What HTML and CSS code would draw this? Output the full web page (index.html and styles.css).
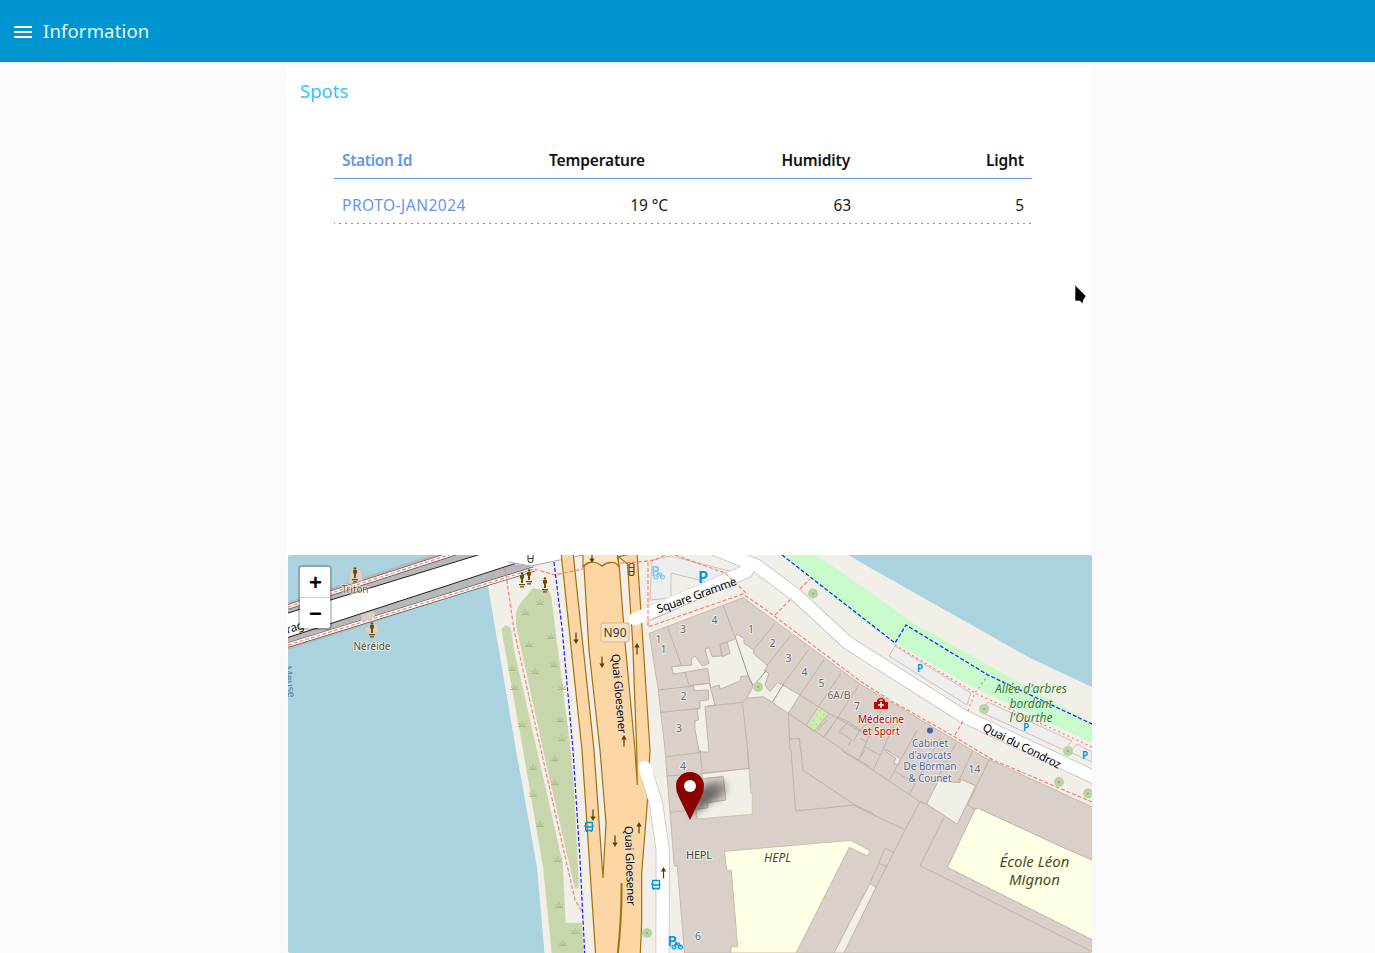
FILE: index.html
```html
<!DOCTYPE html>
<html lang="en">
<head>
<meta charset="utf-8">
<title>Information</title>
<link rel="stylesheet" href="styles.css">
</head>
<body>
<header class="topbar">
  <svg class="menu-icon" width="18" height="12" viewBox="0 0 18 12"><path d="M0 0h18v2H0zM0 5h18v2H0zM0 10h18v2H0z" fill="#fff"/></svg>
  <span class="topbar-title">Information</span>
</header>
<main class="card">
  <h1 class="card-title">Spots</h1>
  <section class="stations">
    <div class="row head"><span class="id">Station Id</span><span class="temp">Temperature</span><span class="hum">Humidity</span><span class="light">Light</span></div>
    <div class="row data"><a class="id">PROTO-JAN2024</a><span class="temp">19 °C</span><span class="hum">63</span><span class="light">5</span></div>
    <svg class="dots" width="698" height="1"><path d="M0 .5H698" stroke="#6495ed" stroke-width="1" stroke-dasharray="2 4" stroke-dashoffset="1"/></svg>
  </section>
  <section class="map">
    <svg class="map-canvas" width="804" height="398" viewBox="288 555 804 398">
      <defs>
        <g id="statue" fill="#734a08"><circle cx="0" cy="-6.500" r="1.300"/><path d="M-2-5h4v3.500H1V3h-2v-4.500h-1zM-3 4h6v1.300h-6zM-2 6.200h4v1.300h-4z"/></g>
        <g id="grass" fill="none" stroke="#a9bd8c" stroke-width="1"><path d="M-4 2.500h8M0 2v-5M-1 2l-2.500-3M1 2l2.500-3"/></g>
        <g id="up"><path d="M0 5.500v-9" stroke="#5c3b00" stroke-width="1.200"/><path d="M-2.600-1.500L0-6l2.600 4.500z" fill="#5c3b00"/></g>
        <g id="tree"><circle r="5" fill="#b9d3a3"/><circle r="1" fill="#85a974"/></g>
        <g id="bus" fill="none" stroke="#0092da" stroke-width="1.300"><rect x="-3.400" y="-4.500" width="6.800" height="8" rx=".5"/><path d="M-3.400 0h6.800M-2.500 3.500v1.500M2.500 3.500v1.500"/><path d="M-4.200-2v2M4.200-2v2" stroke-width=".8"/></g>
        <g id="bike" fill="none" stroke-width="1.200"><circle cx="-3" cy="2" r="2"/><circle cx="3.500" cy="2" r="2"/><path d="M-3 2l2-4 3 3.500M-1-2h3l1.500 4M-2.500-3h2"/></g>
        <linearGradient id="fade" gradientUnits="userSpaceOnUse" x1="697" y1="805" x2="728" y2="785"><stop offset="0" stop-opacity=".5"/><stop offset=".5" stop-opacity=".5"/><stop offset="1" stop-opacity=".2"/></linearGradient>
        <filter id="soft" x="-50%" y="-50%" width="200%" height="200%"><feGaussianBlur stdDeviation="3.500"/></filter>
      </defs>
      <rect x="288" y="555" width="804" height="398" fill="#f2efe9"/>
      <path d="M288 555H480L488 586L516 750L537 867L544.500 953H288z" fill="#aad3df"/>
      <path d="M848 555L860 562L1030 658L1092 687V555z" fill="#aad3df"/>
      <path d="M782 555H816L860 585L913 623L988 665L1092 723V743L973 687L895 643L860 619z" fill="#c8facc"/>

      <!-- embankment grass -->
      <g fill="#c8d7ab">
        <path d="M501.500 629L506 625L511 628L514 650L537 750L562.700 863L565.700 922.700H581.700L584 953H551.700L543 867L523 750L502 633z"/>
        <path d="M516 613L519 605L533 588L542 590L548 589L551 595L558 650L570.700 750L574 790L579 887L575 889L543 750L516 625z"/>
      </g>
      <use href="#grass" x="540" y="602"/><use href="#grass" x="525" y="612"/><use href="#grass" x="551" y="636"/><use href="#grass" x="529" y="644"/><use href="#grass" x="554" y="664"/><use href="#grass" x="535" y="671"/><use href="#grass" x="512" y="668"/><use href="#grass" x="514" y="687"/><use href="#grass" x="562" y="687"/><use href="#grass" x="522" y="724"/><use href="#grass" x="560" y="719"/><use href="#grass" x="562" y="738"/><use href="#grass" x="555" y="758"/><use href="#grass" x="533" y="767"/><use href="#grass" x="555" y="782"/><use href="#grass" x="533" y="794"/><use href="#grass" x="540" y="824"/><use href="#grass" x="558" y="859"/><use href="#grass" x="559" y="905"/><use href="#grass" x="575" y="931"/><use href="#grass" x="563" y="943"/>

      <!-- bridge -->
      <path d="M288 602L431 555H530V571L488 585L288 650z" fill="#b8b8b8"/>
      <path d="M288 613L478 555H583L531 566L514 564L288 637z" fill="#fff"/>
      <path d="M288 613L478 555M288 637.500L515 563.500" stroke="#222" fill="none"/>
      <path d="M508 562L531 566L583 555" stroke="#aaa" fill="none"/>
      <path d="M288 607L455 553M288 645L534 569" stroke="#555" stroke-width="5" fill="none"/>
      <path d="M288 607L455 553M288 645L534 569" stroke="#fff" stroke-width="3.600" fill="none"/>
      <path d="M349 584V575A6.500 6.500 0 0 1 362 574L363 580z" fill="#d9d0c9" stroke="#c9beb4" stroke-width=".6"/>
      <path d="M361 615l13-4 1 6-13 4zM364 627.500l13.500-4 1.500 6q-1 6-7 6.500-5-1-8-8.500z" fill="#d9d0c9" stroke="#c9beb4" stroke-width=".6"/>

      <!-- parking lots -->
      <g fill="#eee" stroke="#d3bfb8">
        <path d="M652 560L671 556L745 575L731 588L671 573L671 598L650 600z"/>
        <path d="M895 646L889 656L967 705L971 693z"/>
        <path d="M988 702L983 713L1064 750L1072 741z"/>
        <path d="M1077 744L1070 752L1092 762V752z"/>
      </g>

      <!-- buildings -->
      <path d="M649.300 633.300L743.300 597.700L860 684L983 756.700L1092 807V953H684.500L677.300 866H674.300L665 750L658.300 690z" fill="#d9d0c9" stroke="#c6b9ac"/>
      <g transform="matrix(.333333 0 0 .333333 640 550)" fill="#f2efe9" stroke="#c0b2a6" stroke-width="3">
        <path d="M95 350L155 345V325L165 318L187 348L207 340L195 297L207 293L217 320L245 318L240 283L283 268L290 252L312 265V280L342 300L340 310L383 347L372 362L387 370L375 405L390 425L412 398L425 403L480 435L445 490L370 440L320 445L340 408L323 377L303 380L300 393L240 418L238 405L212 413L203 355L135 367L100 372z"/>
        <path d="M160 405L208 400L225 465L195 470L207 606H178L165 540V512L175 510L172 478L180 475V452L205 450L206 420L162 422z"/>
        <path d="M535 470L567 490L522 545L498 527z" fill="#cdebb0"/>
        <path d="M537 482h2M550 494h2M530 494h2M540 508h2M520 510h2M528 524h2M512 524h2" stroke="#7fb35c"/>
        <path d="M240 283L262 277L270 310L248 320z" fill="#d9d0c9"/>
        <g fill="none"><path d="M82 230L125 348M135 367L148 407L208 400M55 420L160 408M62 487L180 475M250 168L287 265M405 220L340 300M452 257L380 347M505 300L430 403M552 330L480 435M603 370L535 470M657 405L595 500L552 560M195 470L307 457L320 445M307 457L323 600L332 730M445 490L450 600M445 490L610 600M450 567L478 565L482 600M480 435L535 470M567 490L690 560M530 545L560 510M590 500L625 515L598 545L635 570L625 585M625 515L660 540L640 575M660 540L690 555M690 510L655 545M552 560L575 530"/>
        <path d="M287 265L325 378L340 408L380 360M430 403L397 457" stroke="#999"/></g>
      </g>
      <g transform="matrix(.333333 0 0 .333333 640 750)" fill="#f2efe9" stroke="#c0b2a6" stroke-width="3">
        <path d="M185 72L327 55L332 130H337V193L172 207L168 178L203 173V158L257 150L250 80L188 86z" stroke="#cdc6a8"/>
        <path d="M253 304L632 271L690 302L683 318L628 292L468 609H273V590H293L274 361H260z" fill="#ffffe5" stroke="#c9bea0"/>
        <g fill="none"><path d="M188 86L250 80L257 150L203 158V173L168 178M75 20L180 8V0L187 72M78 78L185 72M92 187L168 178M323 0L327 55M184 70L327 55M449 0L453 0L467 183L645 165M483 0L488 60L645 165L700 192M605 0L655 30L690 50M655 30L675 0"/></g>
      </g>
      <g transform="matrix(.333333 0 0 .333333 860 730)" fill="#f2efe9" stroke="#c0b2a6" stroke-width="3">
        <path d="M345 238L355 235L600 348L700 392V631L262 412z" fill="#ffffe5"/>
        <path d="M235 152L300 158L302 148L347 167L292 283L200 222z"/>
        <path d="M30 460L48 472L-48 669H-78z"/>
        <path d="M75 58L120 85L115 105L102 98L108 85L78 65z"/>
        <g fill="none"><path d="M-50 65L0 95L180 215L135 300L48 472M-15 228L0 235L135 300M75 355L103 368M75 355L30 460M55 400L82 410M180 215L200 222M252 262L180 407L700 667M345 238L323 225L387 90M337 65L295 155M150 190L240 25M88 150L172 0M40 120L100 -10M0 80L45 -20L70-70M105 125L165 158M15 50L60 75M0 25L25 38M288 40L225 160"/></g>
      </g>

      <!-- N90 carriageways -->
      <g fill="#fcd6a4" stroke="#a3700f" stroke-width="1.200">
        <path d="M561 552L582 750L596 960H640L641.700 922V873L647 807L650 750L637 552L618 557L619.300 567Q616 561 611.500 562.500Q606 563 602 566Q597 561 592 562Q586 563 584 567L589 650L600 750L606 823L603 878L594 750L573 552z"/>
        <path d="M583 552V567Q586 562 592 562Q597 562 602 566Q607 562 611.500 562.500Q616 562 619 567L617 552z" fill="#fae5c7"/>
        <path d="M619.300 567L625 642L635 750L637.300 785L636.700 750L632.700 642L627.500 564L618 556.500z" fill="#f2efe9"/>
        <path d="M621.500 883Q622 915 617.700 955" fill="none" stroke-width="2"/>
      </g>

      <!-- white streets -->
      <g fill="none" stroke-linejoin="round" stroke-linecap="round">
        <g stroke="#c5c5c5" stroke-width="14"><path d="M647 614.500L747 571M648 778L656 803L662.700 850L662.500 965M700 543L757 566L796 595L848 643L963 716L1100 780"/></g>
        <g stroke="#fff" stroke-width="12.400"><path d="M635 619L747 571M644.500 767L656 803L662.700 850L662.500 965M700 543L757 566L796 595L848 643L963 716L1100 780"/></g>
      </g>

      <!-- footways and cycleways -->
      <g fill="none" stroke="#fa8072" stroke-width="1.200" stroke-dasharray="4 2">
        <path d="M288 607L455 553M288 645L534 569L555 575L583 569M505 568L514 630L541 750L575 900L583 913"/>
        <path d="M620 563L638 562L655 560L665 555M648 562V627L743 594L762 607L773 615L860 681L893 702L955 737L993 760L1092 802M675 555L725 573L747 594M775 615L791 599M800 589L810 579M955 735L963 721"/>
        <path d="M895 645L975 693L1092 747M968 711L975 693L988 675" stroke-dasharray="2 3"/>
      </g>
      <g fill="none" stroke="#1a1aff" stroke-width="1.200" stroke-dasharray="4 2"><path d="M554 562L562 628L573 750L580 860L584.700 953M782 555L895 643L906 625L988 675L1092 724"/></g>

      <!-- symbols -->
      <use href="#statue" x="355" y="575"/><use href="#statue" x="372" y="630"/><use href="#statue" x="522" y="580"/><use href="#statue" x="529" y="577"/><use href="#statue" x="545" y="585"/>
      <use href="#tree" x="813" y="593.500"/><use href="#tree" x="758" y="687"/><use href="#tree" x="984" y="709"/><use href="#tree" x="1068" y="751"/><use href="#tree" x="1059" y="782"/><use href="#tree" x="1088" y="793.500"/><use href="#tree" x="647" y="933"/>
      <use href="#up" x="637" y="649"/><use href="#up" x="624" y="741"/><use href="#up" x="639" y="828"/><use href="#up" x="663.500" y="873"/>
      <use href="#up" transform="translate(576 638) rotate(180)"/><use href="#up" transform="translate(602 662) rotate(180)"/><use href="#up" transform="translate(592 557) rotate(180)"/><use href="#up" transform="translate(593 815) rotate(180)"/><use href="#up" transform="translate(615 841) rotate(180)"/>
      <use href="#bus" x="589" y="827"/><use href="#bus" x="656" y="885"/>
      <g fill="none" stroke="#444" stroke-width="1.100"><rect x="629" y="563.500" width="5" height="12" rx="2"/><path d="M629 567.500h5M629 571.500h5M528 555v5q0 2.500 2.500 2.500t2.500-2.500v-5M528 558.500h5"/></g>
      <use href="#bike" x="659" y="575" stroke="#7fc8ec"/><use href="#bike" x="677" y="945" stroke="#0092da"/>
      <text class="parking faint" x="651" y="576" font-size="14">P</text>
      <text class="parking" x="698" y="583" font-size="16.500">P</text>
      <text class="parking" x="667.500" y="946" font-size="15">P</text>
      <g class="parking" font-size="10"><text x="917" y="672">P</text><text x="1023" y="731">P</text><text x="1082" y="759">P</text></g>
      <path d="M874 709v-7h3q0-4 4-4t4 4h3v7zM879 701h4q0-2-2-2t-2 2z" fill="#bf0000"/><path d="M881 702v6M878 705h6" stroke="#fff" stroke-width="1.500"/>
      <circle cx="930" cy="730.500" r="3" fill="#4863a0"/>

      <!-- labels -->
      <g class="number">
        <text x="658.500" y="643">1</text><text x="663.500" y="653">1</text><text x="683" y="633">3</text><text x="714.500" y="624">4</text><text x="751" y="632.500">1</text><text x="772.500" y="647">2</text><text x="788.500" y="662">3</text><text x="804.500" y="676">4</text><text x="821.500" y="687">5</text><text x="839" y="699" textLength="23">6A/B</text><text x="857" y="710">7</text><text x="683.500" y="700">2</text><text x="679" y="732">3</text><text x="683" y="770">4</text><text x="974.500" y="773">14</text><text x="698" y="940">6</text>
      </g>
      <rect x="601" y="623" width="28" height="19" rx="2" fill="#f7e0c5" stroke="#d9b58c"/>
      <text class="plate" x="615" y="637" textLength="23">N90</text>
      <text class="label street" transform="translate(698 599) rotate(-20)" textLength="84">Square Gramme</text>
      <text class="label street" transform="translate(1020 749.500) rotate(27)" textLength="86">Quai du Condroz</text>
      <text class="label street" transform="translate(615 694) rotate(85)" textLength="80">Quai Gloesener</text>
      <text class="label street" transform="translate(626 866) rotate(88)" textLength="80">Quai Gloesener</text>
      <text class="label street" transform="translate(296 631) rotate(-17)">rag</text>
      <text class="label river" transform="translate(286 682) rotate(82)" textLength="32">Meuse</text>
      <g class="label statue-name"><text x="355" y="593" textLength="27" opacity=".8">Triton</text><text x="372" y="649.500" textLength="37">Néréide</text></g>
      <g class="label medical"><text x="881" y="723" textLength="46">Médecine</text><text x="881" y="735" textLength="37">et Sport</text></g>
      <g class="label office"><text x="930" y="746.500" textLength="36">Cabinet</text><text x="930" y="758.500" textLength="43">d'avocats</text><text x="930" y="770" textLength="53">De Borman</text><text x="930" y="782" textLength="43">&amp; Counet</text></g>
      <g class="label alley"><text x="1031" y="693" textLength="72">Allée d'arbres</text><text x="1031" y="707.500" textLength="43">bordant</text><text x="1031" y="721.500" textLength="43">l'Ourthe</text></g>
      <text class="label" x="699" y="858.500" font-size="11" textLength="26" fill="#444">HEPL</text>
      <text class="label" x="777.500" y="862" font-size="12" font-style="italic" textLength="27" fill="#4d4d12">HEPL</text>
      <g class="label school"><text x="1034.500" y="867" textLength="70">École Léon</text><text x="1034.500" y="885" textLength="51">Mignon</text></g>

      <!-- station marker -->
      <path d="M691 817L698 792Q712 778 726 782Q732 793 712 801z" fill="url(#fade)" filter="url(#soft)"/>
      <path d="M690 820L679 797.500Q676 792 676 786A14 14 0 0 1 704 786Q704 792 701 797.500z" fill="#8b0000"/>
      <circle cx="690" cy="786" r="6" fill="#fff"/>
    </svg>
    <div class="zoom"><button class="zoom-btn">+</button><button class="zoom-btn">−</button></div>
  </section>
</main>
<svg class="cursor" width="14" height="22" viewBox="0 0 14 22"><path d="M1 1V17H6L8.500 20L9.500 16L12 12z" fill="#000" stroke="#fff" stroke-width=".6"/></svg>
</body>
</html>
```
FILE: styles.css
```css
* { box-sizing: border-box; }
body { margin: 0; height: 953px; overflow: hidden; background: #fafafa; color: #222; font-family: "Noto Sans", sans-serif; font-size: 16px; }
.topbar { height: 62px; padding-left: 14px; display: flex; align-items: center; gap: 11px; background: #0094d0; color: #e9f6fc; }
.menu-icon { margin-top: 2px; }
.topbar-title { font-size: 18.5px; font-weight: 400; line-height: 28px; letter-spacing: .15px; }
.card { width: 805px; height: 885px; margin: 6px 0 0 287px; background: #fff; display: flex; flex-direction: column; }
.card-title { margin: 0; padding: 9px 13px 0; height: 68px; font-size: 18.5px; line-height: 28px; font-weight: 400; letter-spacing: 0; color: #32c3fb; }
.stations { height: 419px; margin: 0 60px 0 47px; }
.row { display: grid; grid-template-columns: 180px 162px 183px 173px; padding: 0; text-align: right; }
.head { height: 43px; padding-top: 12px; line-height: 24px; font-weight: 600; font-size: 15.5px; letter-spacing: -.15px; color: #111; border-bottom: 1px solid #6495ed; }
.data { height: 44px; padding-top: 14px; line-height: 24px; font-size: 15.5px; letter-spacing: -.1px; font-weight: 400; color: #222; }
.id { padding-left: 8px; text-align: left; color: #6495ed; }
.head .id { letter-spacing: -.35px; }
.data .id { letter-spacing: .5px; }
.head .temp { padding-right: 31px; }
.data .temp { padding-right: 8px; }
.head .hum { padding-right: 9px; }
.data .hum { padding-right: 8px; }
.light { padding-right: 8px; }
.dots { display: block; }
.map { position: relative; width: 804px; height: 398px; margin-left: 1px; border-radius: 2px; overflow: hidden; }
.map-canvas { display: block; }
.zoom { position: absolute; left: 10px; top: 10px; width: 34px; border: 2px solid rgba(0,0,0,.2); border-radius: 4px; background-clip: padding-box; overflow: hidden; }
.zoom-btn { display: block; width: 30px; height: 30px; margin: 0; padding: 2px 0 0 1px; border: 0; background: #fff; color: #000; font: bold 22px/28px "Liberation Sans", sans-serif; }
.zoom-btn:first-child { height: 31px; border-bottom: 1px solid #ccc; }
.cursor { position: absolute; left: 1074px; top: 284px; }
.label { text-anchor: middle; paint-order: stroke; stroke: rgba(255,255,255,.6); stroke-width: 2px; stroke-linejoin: round; }
.plate { text-anchor: middle; font-size: 12px; fill: #4d3814; }
.number { text-anchor: middle; font-size: 10.5px; fill: #666; paint-order: stroke; stroke: rgba(255,255,255,.6); stroke-width: 2px; }
.street { font-size: 11.5px; fill: #000; stroke-width: 1px; }
.river { font-size: 10.5px; fill: #4d80b3; stroke: none; }
.statue-name { font-size: 10px; fill: #734a08; }
.medical { font-size: 10px; fill: #bf0000; }
.office { font-size: 10px; fill: #4863a0; }
.alley { font-size: 12px; font-style: italic; fill: #2b7a2b; stroke-width: 1px; }
.school { font-size: 15px; font-style: italic; fill: #4d4d12; }
.parking { fill: #0092da; font-weight: 600; }
.faint { fill: #7fc8ec; }
```
